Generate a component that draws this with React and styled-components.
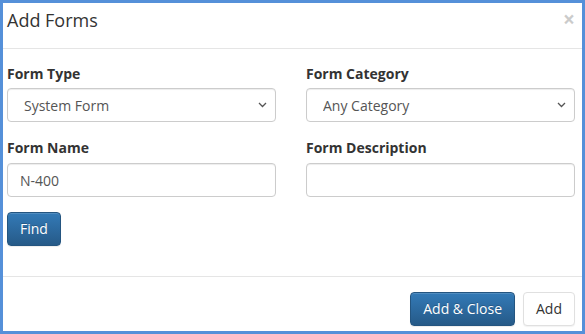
import React, { useState } from 'react'
import styled, { createGlobalStyle } from 'styled-components'

const GlobalStyle = createGlobalStyle`
    html, body {
        margin: 0;
        padding: 0;
        background: #fff;
    }
    body {
        font-family: 'Open Sans', 'Liberation Sans', sans-serif;
        font-size: 14px;
        color: #333;
    }
    * {
        box-sizing: border-box;
    }
`
const Modal = styled.div`
    width: 585px;
    height: 334px;
    border: 3px solid #5590d9;
    background: #fff;
    display: flex;
    flex-direction: column;
`
const Header = styled.div`
    display: flex;
    justify-content: space-between;
    align-items: flex-start;
    padding: 4px 7px 15px 4px;
    border-bottom: 1px solid #e5e5e5;
`
const Title = styled.h4`
    margin: 0;
    font-size: 18px;
    font-weight: 400;
    line-height: 26px;
    color: #333;
`
const Close = styled.button`
    border: none;
    background: none;
    padding: 0;
    margin-top: 2px;
    font-family: 'Open Sans', 'Liberation Sans', sans-serif;
    font-size: 21px;
    font-weight: 700;
    line-height: 1;
    color: #000;
    opacity: .2;
    cursor: pointer;
`
const Body = styled.div`
    padding: 15px 7px 15px 4px;
    flex: 1;
`
const Row = styled.div`
    display: grid;
    grid-template-columns: 1fr 1fr;
    column-gap: 30px;
    margin-bottom: ${props => props.gap}px;
`
const Label = styled.label`
    display: block;
    font-weight: 700;
    line-height: 20px;
    margin-bottom: ${props => props.gap}px;
    color: #333;
`
const fieldCss = `
    display: block;
    width: 100%;
    height: 34px;
    border: 1px solid #ccc;
    border-radius: 4px;
    background-color: #fff;
    box-shadow: inset 0 1px 1px rgba(0,0,0,.075);
    font-family: 'Open Sans', 'Liberation Sans', sans-serif;
    font-size: 14px;
    color: #555;
    outline: none;
`
const Select = styled.select`
    ${fieldCss}
    appearance: none;
    padding: 0 30px 0 16px;
    background-image: url("data:image/svg+xml;utf8,<svg xmlns='http://www.w3.org/2000/svg' width='9' height='6' viewBox='0 0 9 6'><path d='M1 1l3.5 3.5L8 1' fill='none' stroke='%23555' stroke-width='1.3'/></svg>");
    background-repeat: no-repeat;
    background-position: right 8px center;
`
const Input = styled.input`
    ${fieldCss}
    padding: 0 12px;
`
const Button = styled.button`
    height: 34px;
    padding: 0 12px;
    border-radius: 4px;
    font-family: 'Open Sans', 'Liberation Sans', sans-serif;
    font-size: 14px;
    line-height: 20px;
    cursor: pointer;
    color: ${props => props.primary ? '#fff' : '#333'};
    border: 1px solid ${props => props.primary ? '#245580' : '#e0e0e0'};
    background: ${props => props.primary ? 'linear-gradient(to bottom, #337ab7 0, #265a88 100%)' : '#fff'};
    text-shadow: ${props => props.primary ? '0 -1px 0 rgba(0,0,0,.2)' : 'none'};
    box-shadow: ${props => props.primary ? 'inset 0 1px 0 rgba(255,255,255,.15), 0 1px 1px rgba(0,0,0,.075)' : '0 1px 1px rgba(0,0,0,.05)'};
`
const Footer = styled.div`
    display: flex;
    justify-content: flex-end;
    gap: 8px;
    padding: 15px 7px 5px 4px;
    border-top: 1px solid #e5e5e5;
`

export default function App() {
    const [formName, setFormName] = useState("N-400")
    const [formDesc, setFormDesc] = useState("")
    return (
        <>
            <GlobalStyle />
            <Modal>
                <Header>
                    <Title>Add Forms</Title>
                    <Close>×</Close>
                </Header>
                <Body>
                    <Row gap={16}>
                        <div>
                            <Label gap={4}>Form Type</Label>
                            <Select defaultValue="system">
                                <option value="system">System Form</option>
                                <option value="custom">Custom Form</option>
                            </Select>
                        </div>
                        <div>
                            <Label gap={4}>Form Category</Label>
                            <Select defaultValue="any">
                                <option value="any">Any Category</option>
                            </Select>
                        </div>
                    </Row>
                    <Row gap={15}>
                        <div>
                            <Label gap={5}>Form Name</Label>
                            <Input value={formName} onChange={e => setFormName(e.target.value)} />
                        </div>
                        <div>
                            <Label gap={5}>Form Description</Label>
                            <Input value={formDesc} onChange={e => setFormDesc(e.target.value)} />
                        </div>
                    </Row>
                    <Button primary>Find</Button>
                </Body>
                <Footer>
                    <Button primary>Add &amp; Close</Button>
                    <Button>Add</Button>
                </Footer>
            </Modal>
        </>
    )
}
